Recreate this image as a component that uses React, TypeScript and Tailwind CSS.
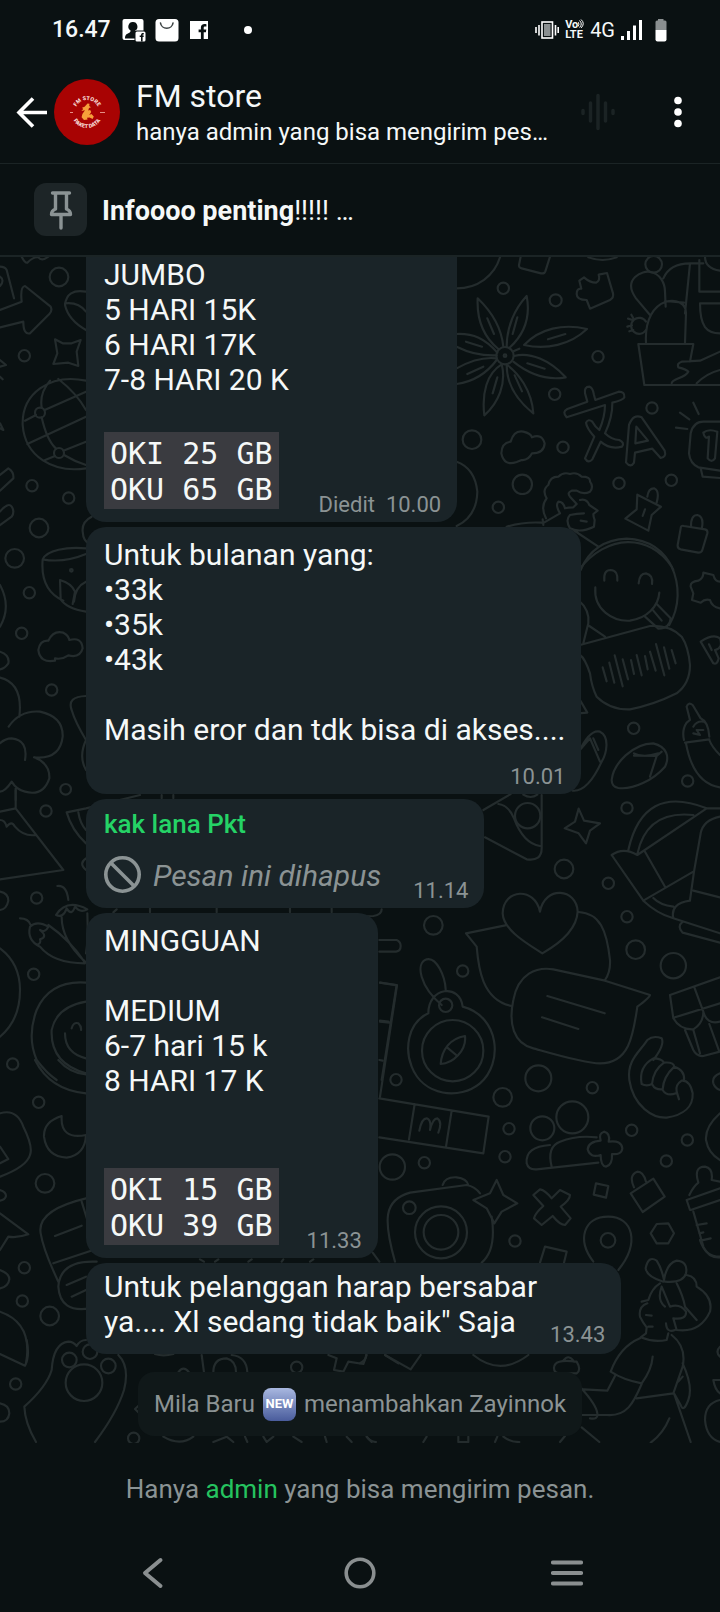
import React from 'react';

type Dot = [number, number, number];

const Dots: React.FC<{ items: Dot[] }> = ({ items }) => (
    <>
        {items.map(([cx, cy, r], i) => <circle key={i} cx={cx} cy={cy} r={r} />)}
    </>
);

// Doodles are drawn at three times their size, one group per area
const Wallpaper: React.FC = () => (
    <svg
        className="absolute inset-0 h-full w-full text-[#242c2d]"
        viewBox="0 257 720 1186"
        preserveAspectRatio="xMidYMin slice"
        fill="none"
        stroke="currentColor"
        strokeWidth="6.5"
        strokeLinecap="round"
        strokeLinejoin="round"
        aria-hidden="true"
    >
        <g transform="translate(360 250) scale(.33333)">
            <Dots items={[[430, 115, 17], [587, 151, 18], [714, 320, 17], [584, 433, 17], [336, 569, 28], [609, 592, 17], [487, 703, 29], [415, 772, 17], [777, 700, 17], [934, 691, 17], [876, 474, 17], [435, 317, 26], [435, 317, 4]]} />
            <path d="M290 115C350 115 405 80 422 15M482 20L477 45Q476 53 485 55L543 70Q553 72 556 64L570 20M685 22Q728 38 770 22" />
            <path d="M690 176L680 150Q650 150 650 132Q650 115 664 116L658 92L672 82Q690 98 708 98Q722 92 716 74L741 69L759 130Q762 143 750 150Z" />
            <path d="M430 290C425 240 400 190 353 145C350 210 370 260 415 297M440 290C440 230 465 175 500 138C512 200 495 250 450 292M492 285C540 235 610 220 681 237C630 285 560 300 492 285ZM462 318C510 305 570 330 617 382C560 392 510 375 460 335M442 345C475 370 515 420 520 490C470 450 440 400 440 345M425 343C440 400 415 460 373 496C365 430 380 370 425 343M410 325C370 320 335 330 290 355M410 330C380 370 340 395 290 402M412 308C375 265 340 250 290 252M410 316C370 318 330 310 290 290M382 205L402 252M472 202L458 252M564 268L616 252M318 275L366 290M322 372L370 350M502 340L554 356M412 382L398 430M464 376L486 424M462 303L478 296" />
            <path d="M853 405L835 282L1000 282L990 335M853 405H1080M858 278C850 130 980 130 978 190L975 278M870 195L828 145C785 85 850 60 870 66C900 70 915 100 915 125L917 170M910 85C925 50 955 40 990 40L975 190M990 40H1030M915 153L972 158M1018 30V125H1080M1020 160H1080M1020 160C1020 230 1040 250 1080 250M1035 20Q1035 55 1080 62M935 400C935 385 975 385 985 365Q980 358 955 352Q950 340 965 335L1020 332L1080 305M1010 400Q1040 370 1080 360" />
            <circle cx="881" cy="43" r="25" />
            <path d="M858 215A24 24 0 1 0 858 240M818 210L804 206M816 226L802 230M820 205L814 194M820 240L808 244" />
            <path d="M620 502Q605 485 622 477L682 455L675 430Q672 410 688 410Q698 412 702 435L706 450L776 425Q795 425 793 442Q790 450 757 458Q758 500 735 550Q755 570 778 570Q795 578 786 590Q750 600 722 575L697 628Q685 642 675 625L703 560Q680 535 678 518Q685 505 697 515Q705 530 718 540Q735 500 735 465Z" />
            <path d="M798 637L807 525Q820 490 845 502L914 602Q920 622 902 624L877 596L825 608L822 638Q812 655 798 637ZM826 580L829 530L864 572Z" />
            <path d="M470 636Q432 650 424 610Q425 578 452 575Q462 540 490 545Q512 550 516 562Q545 550 554 580Q552 610 516 610Q505 632 485 630Z" />
            <path d="M1080 515H1030Q1000 515 992 550L987 610Q990 640 1015 652L1080 662M1022 655L1028 680L1080 684M1030 548Q1045 535 1072 545L1065 625Q1055 640 1043 625L1047 560Q1035 570 1030 548M960 488L988 508M1000 458L1016 492M948 533L982 537" />
            <path d="M558 805Q540 770 560 745Q545 720 565 705Q570 680 595 680Q610 665 630 672Q650 665 665 680Q692 680 690 695Q702 710 690 725Q670 735 650 722H635Q620 728 630 740L650 762L640 772Q625 772 615 775Q610 755 595 755Q585 765 600 790M660 750Q680 745 688 765L713 782L700 792Q700 800 704 810L702 830Q660 850 630 835Q615 810 630 795Q650 790 672 790M548 808L550 825M548 820L600 790M640 840L715 890M662 812L680 815" />
            <path d="M832 734L903 770L875 795L865 842L796 806L830 778ZM862 740Q865 715 882 715Q900 722 890 758M855 778L848 798M972 828Q962 825 962 835L953 885Q952 895 962 898L1015 908Q1025 908 1027 900L1042 850Q1044 840 1035 838ZM993 828Q993 795 1012 795Q1032 800 1026 832" />
            <path d="M290 635Q345 655 352 725Q350 800 290 828M440 830Q490 815 545 818M662 960Q700 870 800 866Q900 870 940 960" />
        </g>

        <g transform="translate(360 550) scale(.33333)">
            <Dots items={[[821, 535, 17], [983, 693, 17], [801, 774, 17], [612, 957, 28], [745, 1000, 17], [801, 1100, 17], [503, 797, 38]]} />
            <path d="M656 60C740-50 870-50 935 50C960 105 960 170 928 225M733 92Q730 60 752 60Q775 62 772 92M836 100Q838 70 858 70Q880 75 876 102M706 112C700 180 760 215 810 212C860 205 895 170 898 128M888 160L932 205Q930 235 895 236L855 200M880 182L905 212" />
            <path d="M660 285L870 228Q930 225 965 260Q985 290 990 345Q990 400 950 430Q880 465 810 478Q750 480 710 440Q695 410 690 370Q675 325 660 315M655 150Q690 180 685 220L670 280M688 228L735 260M660 450L682 488L655 490" />
            <path d="M728 352L740 394M748 338L763 398M764 316L788 409M788 328L804 388M813 330L822 372M830 315L845 376M855 318L863 358M870 305L887 362M888 282L913 376M912 292L928 356M935 300L947 340" />
            <path d="M1080 95Q1065 95 1060 75L1030 68Q1030 85 1015 92Q990 95 992 110L1000 130L996 150L1022 158Q1035 145 1050 150Q1055 170 1080 175M1022 275L1060 340Q1072 345 1076 325L1065 300Q1090 295 1080 265Q1060 250 1022 275ZM1047 283L1055 300" />
            <path d="M655 610C680 555 700 540 720 545C750 560 740 610 725 635C700 690 670 725 638 722M655 605L690 565L720 635M700 565L715 600M755 690C760 640 820 580 880 580C920 590 930 620 915 650C880 690 820 720 775 714Q755 710 755 690ZM822 617L890 618L905 605M890 618L870 680M822 610Q850 625 895 610" />
            <path d="M975 578L1048 568M972 570Q965 540 980 518L990 510L980 470Q985 455 998 465L1022 505Q1045 515 1048 560M1000 550L1020 555L1010 540L1030 540M978 580Q1000 700 1080 712M1048 570Q1055 590 1080 615M1000 530Q1010 512 1030 515" />
            <path d="M656 776L672 812L720 820L690 842L678 880L656 850L614 835L645 815Z" />
            <path d="M370 780L452 732M375 862L500 928Q545 935 545 895V735M415 762Q445 765 462 805Q490 880 540 888M490 734Q512 748 532 734" />
            <path d="M755 915L850 1052L1000 965M755 915Q790 890 832 915L1040 775M805 900Q850 700 1040 775L1080 775M832 912Q860 780 1000 795M855 905L915 1010M1080 800Q1030 810 1022 850L1002 965L990 1050M1000 1022L1080 1042M850 1052Q890 1090 940 1105Q930 1060 990 1052M880 1044Q900 1065 940 1070M940 1105L1080 1150M968 1115Q950 1130 968 1148L1080 1178" />
        </g>

        <g transform="translate(360 900) scale(.33333)">
            <Dots items={[[220, 76, 28], [308, 213, 17], [827, 149, 28], [940, 197, 38], [257, 316, 20], [278, 452, 92], [108, 539, 17], [535, 535, 39], [428, 592, 28], [697, 563, 17], [447, 686, 17], [435, 770, 17], [97, 801, 38], [193, 788, 17], [815, 691, 17], [982, 720, 17], [919, 783, 17], [148, 923, 19], [243, 997, 78], [243, 997, 52], [465, 1023, 17], [744, 1021, 22], [637, 652, 48], [547, 685, 36]]} />
            <path d="M540 35C525-40 430-35 428 40C430 90 500 130 547 160C600 130 650 90 653 35C650-35 555-45 540 35ZM436 76L318 100L350 140C355 200 365 300 455 318M656 36C720 40 740 90 750 180Q752 215 735 240" />
            <path d="M735 242L870 285Q870 292 832 320C820 400 810 490 720 490C670 490 540 450 520 445C460 430 445 370 460 300C475 220 530 200 580 208ZM562 288L734 340M546 352L655 387" />
            <path d="M205 340C140 370 135 450 155 500C190 590 300 600 360 550C430 490 420 350 308 320C300 250 205 260 205 340M257 268C255 230 230 170 200 178C165 190 180 260 245 315M315 408C320 450 280 490 242 492C245 450 270 415 315 408ZM262 443L292 468" />
            <path d="M60 248L111 256L60 590M60 365L88 368M58 480L68 482M58 595L386 650L370 760L58 712M164 612L147 718M275 632L258 740M178 692Q185 655 200 655Q215 660 210 690Q218 655 232 655Q248 665 235 698M58 120H110Q122 125 122 138Q122 153 108 155H58" />
            <path d="M930 285L1080 232M930 285L940 355Q960 390 1000 388Q1030 370 1030 335Q1040 375 1080 365M1003 262L1030 335M945 352L1080 310M975 390L1000 450Q1010 470 1030 468L1080 455M1048 372L1078 455M1000 390L1020 460" />
            <path d="M808 540C800 480 840 455 862 420Q880 405 905 415Q915 435 880 480M808 540C820 620 880 655 920 653C970 645 1000 620 998 580Q990 540 965 542Q945 555 950 575L957 598M845 552Q835 500 880 475Q905 475 912 488Q940 485 943 500Q975 510 972 540M845 552Q860 560 876 552Q880 510 912 488M878 555Q885 570 908 568Q910 530 943 500M908 570Q920 590 948 580" />
            <path d="M500 790Q495 740 570 735M500 790Q505 810 530 808L715 788M575 800Q560 740 600 725Q650 705 710 712M722 722Q715 700 732 695Q752 700 746 725Q785 720 787 745Q785 765 756 762Q758 795 738 800Q722 798 722 765Q690 775 683 748Q685 725 722 722Z" />
            <path d="M105 1085C70 960 70 900 150 878L320 855Q345 860 360 880M395 950Q410 1050 365 1088M248 855Q255 830 290 832Q320 835 325 855M410 840L430 885L472 910L425 935L403 970L380 925L340 900L390 880Z" />
            <path d="M520 885L540 868Q555 870 575 895L600 870L630 885Q630 900 602 920L632 955L615 975Q600 975 578 948L545 975L522 955Q525 940 550 918ZM708 850L745 858L738 893L701 884ZM540 1088L555 1040L620 1055L612 1088M700 1085C650 1020 670 950 745 950C820 950 840 1030 775 1110" />
            <path d="M812 880L880 836L914 890L848 936ZM822 862Q805 825 832 815Q850 815 858 845M890 972L925 970L942 1000L925 1030L890 1030L872 1000ZM980 900L1080 865M992 930L1080 900M980 900L990 930M988 885Q1000 860 1015 848Q1000 800 1035 800Q1060 805 1055 840L1080 845M1000 935L1030 1040Q1045 1075 1080 1072M1010 975L1040 970M1018 1000L1030 997M1022 1022L1052 1015M1080 640Q1035 680 1038 720Q1045 760 1080 780M1080 520Q1055 530 1060 550Q1065 565 1080 570M58 1085L38 1058" />
        </g>

        <g transform="translate(360 1240) scale(.33333)">
            <path d="M910 125Q860 110 857 85Q865 45 890 62Q905 85 912 120Q920 70 950 62Q985 65 978 100Q970 130 915 125M980 105Q1010 110 1010 140Q1060 170 1050 215Q1020 280 950 270L940 235Q980 240 978 215Q960 190 930 200L905 140M900 130Q875 145 865 180L845 185M862 190Q835 200 840 230Q850 250 860 262L858 280L842 292Q880 308 920 300L925 280M950 130Q970 170 975 200L1010 240M905 140Q890 180 915 200M918 250Q920 280 945 270M858 225L875 227M865 260L878 260" />
            <path d="M840 295Q780 320 752 395Q790 420 845 430Q875 390 878 350M935 285Q980 320 968 380L940 460L830 475M765 408L742 452L670 448M845 432C820 490 800 530 740 525L665 525M660 440Q710 495 712 520Q715 540 690 535M968 370Q1000 440 985 480Q970 520 962 495L942 460L992 606M968 410L955 425M928 535Q910 580 872 608M665 562L718 606M600 606L615 588M582 385Q580 355 650 365Q665 390 650 400H600Q582 400 582 385ZM610 362Q625 340 642 365" />
            <path d="M1080 420H1060Q1065 450 1080 460M1080 480Q1035 490 1035 540Q1040 595 1080 606M1080 320Q1065 335 1080 350M1020 0Q1035 50 1080 50M75 345Q120 370 152 388L182 345M340 345Q420 410 505 345M0 370Q20 360 18 345M20 590Q30 605 48 606M190 606L200 590M295 590V606H325V590M405 606L412 590M430 590Q450 606 478 606" />
        </g>

        <g transform="translate(0 250) scale(.33333)">
            <Dots items={[[177, 81, 28], [73, 317, 17], [120, 488, 15], [177, 609, 15], [96, 707, 17], [206, 744, 17], [117, 834, 28], [44, 925, 28]]} />
            <path d="M0 180L65 155Q60 110 75 108Q90 120 152 170Q158 182 148 192L90 250Q70 255 70 215L0 232M0 50Q15 50 20 60L42 145M0 80Q15 90 0 108M65 20Q75 40 82 38Q100 20 115 22Q125 35 145 20M258 125Q200 115 195 165Q205 210 258 240M195 160Q235 155 258 185" />
            <path d="M165 268L188 280H215L242 270L230 305L235 348L205 338L160 342L172 310Z" />
            <path d="M258 392C150 370 65 430 68 525C75 620 160 670 258 655M75 512L108 495M134 480L258 425M82 582L258 500M190 602L258 575M125 472Q118 430 150 392M125 502Q140 570 168 596M175 387Q230 430 258 480M130 632L165 618M192 615Q225 635 258 645M0 330L18 345L0 350M0 380L8 388M0 520L10 540L0 535" />
            <path d="M0 675L25 655Q42 665 40 685L0 722M0 785Q25 755 35 770Q45 785 35 800L0 825M275 800Q245 815 248 845Q250 875 268 880" />
        </g>

        <g transform="translate(0 530) scale(.33333)">
            <Dots items={[[88, 188, 17], [65, 310, 17], [155, 480, 17], [197, 778, 16], [214, 121, 4]]} />
            <path d="M258 55C200 50 140 60 128 88Q120 180 190 212M128 88Q190 100 258 72M182 208L180 150Q215 160 225 185L218 222M222 215Q225 170 258 155M182 208Q200 235 258 245M0 165Q35 230 0 290M0 365Q30 375 25 400Q15 415 0 418" />
            <path d="M165 392Q120 400 115 360Q120 330 145 332Q160 300 190 308Q205 315 208 330Q245 320 248 355Q240 385 205 376Q185 390 165 385Z" />
            <path d="M0 443Q70 460 58 560M26 590Q60 540 120 545Q190 560 188 620Q180 690 102 682Q150 700 148 745Q130 800 75 785Q50 780 35 755Q15 785 0 785M75 690Q85 630 35 625Q15 625 0 640M258 498Q200 500 215 540Q225 575 258 630Q235 680 258 720M47 770V810" />
        </g>

        <g transform="translate(0 780) scale(.33333)">
            <Dots items={[[138, 93, 17], [110, 354, 17], [101, 583, 17], [38, 852, 17]]} />
            <path d="M47 30V85L190 270L0 298M0 95L47 85M0 120Q15 120 20 140Q35 120 45 140Q70 170 108 165M200 97L258 85L420 45M200 97Q215 150 258 190M235 97Q240 130 258 150M258 235Q235 250 258 270M0 335Q25 340 25 362Q20 388 0 390" />
            <path d="M172 318Q200 315 205 360M168 405Q200 355 262 388Q240 400 225 380Q215 410 200 385Q190 415 168 405ZM185 412Q185 480 255 545M262 400Q265 480 258 520M60 415Q85 415 92 435M120 500Q80 480 90 440Q110 420 145 440Q135 460 120 450Q145 470 120 478Q125 490 110 495M120 500Q160 550 255 550M145 435Q210 480 255 548" />
            <path d="M0 505Q60 550 60 630Q60 720 0 770M258 608Q150 600 110 690Q80 770 110 840Q140 880 170 900M258 665Q170 680 155 750Q150 850 258 880M195 760Q195 820 258 835M215 745Q220 725 235 730Q245 740 243 750M485 45V55M520 45V55M340 397L350 388M450 385V397M650 385V397M870 385V397M995 385V397M1030 405Q1060 412 1120 408Q1145 405 1145 388M1140 608L1190 615L1145 900M1140 722L1165 725" />
        </g>

        <g transform="translate(0 1060) scale(.33333)">
            <Dots items={[[116, 127, 17], [135, 370, 28], [73, 623, 17], [67, 723, 17], [149, 768, 28]]} />
            <path d="M105 0Q150 90 258 100M175 0Q210 40 258 43M0 160Q50 145 70 200Q100 260 90 285Q80 320 0 350M0 260L25 297L0 310M0 390Q18 395 18 408Q15 420 0 422M0 460L85 523Q50 535 25 530L0 570M0 630Q28 640 28 658Q25 680 0 685M185 168Q130 185 132 230Q140 290 200 293Q255 285 258 225Q180 240 185 168Z" />
            <path d="M258 415Q110 450 122 520Q130 570 175 665M245 425L262 480M160 610L280 570M165 528L245 497M290 605Q180 600 175 680Q180 760 270 745M200 675L258 650M215 710L258 690M0 755Q100 790 78 910M600 598L612 605M645 605L655 598M745 605L755 598M845 605L850 598M930 605L940 598" />
        </g>

        <g transform="translate(0 1340) scale(.33333)">
            <Dots items={[[47, 132, 17], [208, 60, 22], [270, 35, 22], [325, 78, 22], [252, 128, 55], [401, 295, 17], [890, 82, 17]]} />
            <path d="M80 0Q90 50 75 77L0 42M0 190Q28 195 28 220Q25 245 0 245M108 306Q75 250 73 200Q140 140 155 90Q160 10 205 5Q220 5 230 18Q240 0 258 0M355 45Q390 80 372 150Q350 220 285 306M605 45L612 97M640 97Q640 55 680 55Q708 62 708 97M695 45Q740 50 742 97M535 97Q550 75 567 97M465 42Q490 50 520 42M985 45L1010 55L1002 90L1030 95L1045 65L1090 72L1100 45M1155 45L1195 70M490 290Q540 320 580 290M640 306L680 290L700 306M735 290L742 306M790 290L800 306L820 290M880 290L905 306M975 290L980 306M1040 290L1055 306M1100 290L1115 306M418 195L405 207L418 220" />
        </g>
    </svg>
);

const StatusBar: React.FC = () => (
    <div className="flex h-[60px] items-center justify-between pl-[52px] pr-[53px]">
        <div className="flex items-center">
            <span className="text-[23px] leading-7 font-medium">16.47</span>
            <svg className="ml-[11px] h-6 w-6" viewBox="0 0 24 24" fill="none" aria-hidden="true">
                <rect x="0.5" y="1" width="21" height="21" rx="2" fill="#fff" />
                <path d="M11 4a4.4 4.6 0 0 1 2.2 8.6c.3 1 .8 1.4 2 1.9v6H3c0-4 2-4.7 4-5.5 1-.4 1.5-1 1.6-2.400A4.5 4.6 0 0 1 11 4Z" fill="#0a1112" />
                <rect x="12.5" y="12.5" width="11.5" height="11.5" rx="2" fill="#0a1112" />
                <rect x="13.5" y="13.5" width="10" height="10" rx="1.5" fill="#fff" />
                <path d="M19 23.500V19h-1.300v-1.500H19c0-2 .8-2.500 2.800-2.400v1.500c-1 0-1.200 0-1.200.9h1.200L21.600 19h-1v4.500Z" fill="#0a1112" />
            </svg>
            <svg className="ml-[9px] h-6 w-6" viewBox="0 0 24 24" fill="none" aria-hidden="true">
                <rect x="0.5" y="1" width="23" height="22.5" rx="3.5" fill="#fff" />
                <path d="M5.500 5a6.300 6 0 0 0 12.500 0" stroke="#3c4344" strokeWidth="1.6" strokeLinecap="round" />
            </svg>
            <svg className="ml-2.5 h-5 w-5" viewBox="0 0 20 20" aria-hidden="true">
                <path fill="#fff" d="M1 1h18v18h-4.300v-6.700h2.200l.4-2.700h-2.600V8c0-.9.400-1.400 1.500-1.400h1.200V4.200c-3.600-.6-5.500.5-5.500 3.500v1.900H9.600v2.700h2.300V19H1z" />
            </svg>
            <span className="ml-[35px] h-2 w-2 rounded-full bg-white" />
        </div>
        <div className="flex items-center">
            <svg className="h-5 w-6" viewBox="0 0 24 20" fill="none" stroke="#fff" strokeWidth="1.6" aria-hidden="true">
                <rect x="7" y="2" width="10.5" height="16" />
                <rect x="9" y="4" width="6.5" height="12" fill="#8a8f90" stroke="none" />
                <path d="M1 7v6M4 5v10.500M20.500 5v10.500M23.200 7v6" />
            </svg>
            <div className="relative ml-1.5 flex w-[19px] flex-col items-start text-[11px] leading-[10px] font-bold">
                <span>Vo</span>
                <span>LTE</span>
                <svg className="absolute -top-px right-0 h-[10px] w-[6px]" viewBox="0 0 6 10" fill="none" stroke="#fff" aria-hidden="true">
                    <path d="M0 3q2 2 0 4.500M1.500 1.500q3.500 3.500 0 7M3 .5q4.500 4 0 8.500" />
                </svg>
            </div>
            <span className="ml-1.5 text-[20px] leading-6">4G</span>
            <svg className="ml-1.5 h-5 w-[22px]" viewBox="0 0 22 20" fill="#fff" aria-hidden="true">
                <path d="M0 16h3v4H0zM6 11h3v9H6zM12 5.500h3V20h-3zM18 0h3v20h-3z" />
            </svg>
            <svg className="ml-3 h-6 w-3" viewBox="0 0 12 24" aria-hidden="true">
                <path fill="#8a8f90" d="M3 1h5.500v1.500H10a1.500 1.500 0 0 1 1.500 1.500v8H.5V4A1.500 1.500 0 0 1 2 2.500h1z" />
                <path fill="#fff" d="M.5 12h11v9.500a2 2 0 0 1-2 2h-7a2 2 0 0 1-2-2z" />
            </svg>
        </div>
    </div>
);

const Avatar: React.FC = () => (
    <svg className="h-[66px] w-[66px] shrink-0" viewBox="0 0 66 66" role="img" aria-label="FM store">
        <defs>
            <path id="arc-top" d="M21 33a12 12 0 0 1 24 0" />
            <path id="arc-bottom" d="M17 33a16 16 0 0 0 32 0" />
        </defs>
        <circle cx="33" cy="33" r="33" fill="#a80303" />
        <g fill="#f6d9d4" fontFamily="Roboto, sans-serif" fontWeight="900" fontSize="5.5" textAnchor="middle">
            <text><textPath href="#arc-top" startOffset="50%">FM STORE</textPath></text>
            <text><textPath href="#arc-bottom" startOffset="50%">PAKET DATA</textPath></text>
        </g>
        <path d="M16 33.500h3M46 33.500h5" stroke="#e58f86" strokeWidth="1.2" />
        <path
            fill="#f6a03a"
            d="M33.500 24.500l2 .3-.3 2.200 1.800 1.200-2 .8-.8 2.500 2-.6 1 2-2 3 2.200-.8 2.400 2.400-1.200 2.400-3-1.400-2.600.2.600 1.800-3.600.4-2.400-2.600.8-3.400 2.600-3.600-3.600.8 1.800-2.200-1.200-1.200 2.600-1z"
        />
    </svg>
);

const Header: React.FC = () => (
    <header className="flex h-[104px] items-center gap-[6px] border-b border-[#1b2425] pl-4 pr-7">
        <button type="button" aria-label="Kembali" className="shrink-0">
            <svg className="h-8 w-8" viewBox="0 0 32 32" fill="none" stroke="#fff" strokeWidth="3.6" aria-hidden="true">
                <path d="M31 16.500H3.500M17 2.500l-14 14 14 14" />
            </svg>
        </button>
        <Avatar />
        <div className="ml-2.5 min-w-0 flex-1 pt-[5px]">
            <h1 className="text-[32px] leading-9">FM store</h1>
            <p className="text-[24px] leading-9 whitespace-nowrap">hanya admin yang bisa mengirim pes…</p>
        </div>
        <button type="button" aria-label="Obrolan suara" className="mr-[42px] shrink-0">
            <svg className="h-10 w-9" viewBox="0 0 36 40" fill="none" stroke="#1b2324" strokeWidth="3.5" strokeLinecap="round" aria-hidden="true">
                <path d="M3 18.500v3M10.500 11v18M18 3.500v33M25.500 11v18M33 18.500v3" />
            </svg>
        </button>
        <button type="button" aria-label="Opsi lainnya" className="shrink-0">
            <svg className="h-8 w-7" viewBox="0 0 28 32" fill="#fff" aria-hidden="true">
                <circle cx="14" cy="4.5" r="3.8" />
                <circle cx="14" cy="16" r="3.8" />
                <circle cx="14" cy="27.5" r="3.8" />
            </svg>
        </button>
    </header>
);

const PinnedMessage: React.FC = () => (
    <div className="flex h-[93px] items-center gap-[15px] border-b-2 border-[#1b2425] px-[34px]">
        <div className="flex h-[53px] w-[53px] shrink-0 items-center justify-center rounded-xl bg-[#1d2527]">
            <svg className="h-10 w-6" viewBox="0 0 24 40" fill="none" stroke="#8b9394" strokeWidth="3.4" strokeLinecap="round" strokeLinejoin="round" aria-hidden="true">
                <path d="M3.500 3h17M6.500 3v16M17.500 3v16M6.500 19q-4 1.500-4 5.500h19q0-4-4-5.500M12 25v13" />
            </svg>
        </div>
        <p className="pt-0.5 text-[27px] leading-8"><b>Infoooo penting</b>!!!!! …</p>
    </div>
);

const Time: React.FC<{ children: React.ReactNode }> = ({ children }) => (
    <span className="-mb-[10px] shrink-0 text-[22px] leading-7 text-[#8b9394]">{children}</span>
);

const Code: React.FC<{ lines: string[] }> = ({ lines }) => (
    <pre className="bg-[#3a3b40] px-[6px] pt-1 pb-px font-['DejaVu_Sans_Mono',monospace] leading-[36px]">
        {lines.join('\n')}
    </pre>
);

const Bubble: React.FC<{ className: string; children: React.ReactNode }> = ({ className, children }) => (
    <article className={`w-fit max-w-full rounded-[20px] bg-[#1a2428] pl-[18px] pr-4 text-[30px] leading-[35px] ${className}`}>
        {children}
    </article>
);

const Chat: React.FC = () => (
    <main className="relative overflow-hidden">
        <Wallpaper />
        <div className="relative flex flex-col gap-[5px] pb-[7px] pl-[86px] pr-4">
            <Bubble className="rounded-t-none pb-[13px]">
                <p className="whitespace-pre-line">{'JUMBO\n5 HARI 15K\n6 HARI 17K\n7-8 HARI 20 K\n\u00a0'}</p>
                <div className="flex items-end justify-between gap-10">
                    <Code lines={['OKI 25 GB', 'OKU 65 GB']} />
                    <Time>Diedit&nbsp; 10.00</Time>
                </div>
            </Bubble>

            <Bubble className="pt-[10px] pb-[13px]">
                <p className="whitespace-pre-line">{'Untuk bulanan yang:\n•33k\n•35k\n•43k\n\u00a0\nMasih eror dan tdk bisa di akses....'}</p>
                <div className="flex h-[34px] items-end justify-end"><Time>10.01</Time></div>
            </Bubble>

            <Bubble className="pt-2 pb-[13px]">
                <h2 className="text-[26px] leading-[34px] font-medium text-[#25d366]">kak lana Pkt</h2>
                <div className="mt-[14px] flex items-end justify-between gap-8">
                    <p className="flex items-center gap-3 text-[#8b9394]">
                        <svg className="h-10 w-[37px] shrink-0" viewBox="0 0 37 40" fill="none" stroke="currentColor" strokeWidth="3.6" aria-hidden="true">
                            <circle cx="18.5" cy="19.5" r="16.7" />
                            <path d="M6.700 7.700l23.600 23.600" />
                        </svg>
                        <i>Pesan ini dihapus</i>
                    </p>
                    <Time>11.14</Time>
                </div>
            </Bubble>

            <Bubble className="pt-[10px] pb-[13px]">
                <p className="whitespace-pre-line">{'MINGGUAN\n\u00a0\nMEDIUM\n6-7 hari 15 k\n8 HARI 17 K\n\u00a0\n\u00a0'}</p>
                <div className="flex items-end justify-between gap-7">
                    <Code lines={['OKI 15 GB', 'OKU 39 GB']} />
                    <Time>11.33</Time>
                </div>
            </Bubble>

            <Bubble className="pt-[6px] pb-[15px]">
                <div className="flex items-end justify-between gap-[13px]">
                    <p>Untuk pelanggan harap bersabar<br />ya.... Xl sedang tidak baik" Saja</p>
                    <Time>13.43</Time>
                </div>
            </Bubble>

            <p className="mt-[13px] mr-[70px] flex h-16 items-center gap-2 self-center rounded-2xl bg-[#101819] px-4 text-[24px] leading-8 text-[#8b9394]">
                Mila Baru
                <span className="flex h-[33px] w-[33px] items-center justify-center rounded-lg bg-linear-to-b from-[#a9b8e0] to-[#4a5c9c] text-[13px] font-bold text-white">NEW</span>
                menambahkan Zayinnok
            </p>
        </div>
    </main>
);

const NavBar: React.FC = () => (
    <nav className="grid h-[78px] grid-cols-3 items-center justify-items-center px-[50px]">
        <button type="button" aria-label="Kembali">
            <svg className="h-8 w-8" viewBox="0 0 32 32" fill="none" stroke="#8a8f90" strokeWidth="4" strokeLinecap="round" strokeLinejoin="round" aria-hidden="true">
                <path d="M23.500 3L8 16l15.500 13" />
            </svg>
        </button>
        <button type="button" aria-label="Beranda">
            <svg className="h-8 w-8" viewBox="0 0 32 32" fill="none" stroke="#8a8f90" strokeWidth="3.6" aria-hidden="true">
                <circle cx="16" cy="16" r="13.8" />
            </svg>
        </button>
        <button type="button" aria-label="Aplikasi terbaru">
            <svg className="h-8 w-8" viewBox="0 0 32 32" fill="none" stroke="#8a8f90" strokeWidth="4.2" strokeLinecap="round" aria-hidden="true">
                <path d="M2 5.500h28M2 16h28M2 26.500h28" />
            </svg>
        </button>
    </nav>
);

const App: React.FC = () => (
    <div className="flex min-h-screen flex-col bg-[#0a1112] font-[Roboto,sans-serif] text-[#f5f8f8]">
        <StatusBar />
        <Header />
        <PinnedMessage />
        <Chat />
        <footer className="flex flex-1 items-center justify-center text-[26px] leading-8 text-[#8b9394]">
            <p>Hanya <a href="#admin" className="text-[#25c35f]">admin</a> yang bisa mengirim pesan.</p>
        </footer>
        <NavBar />
    </div>
);

export default App;
